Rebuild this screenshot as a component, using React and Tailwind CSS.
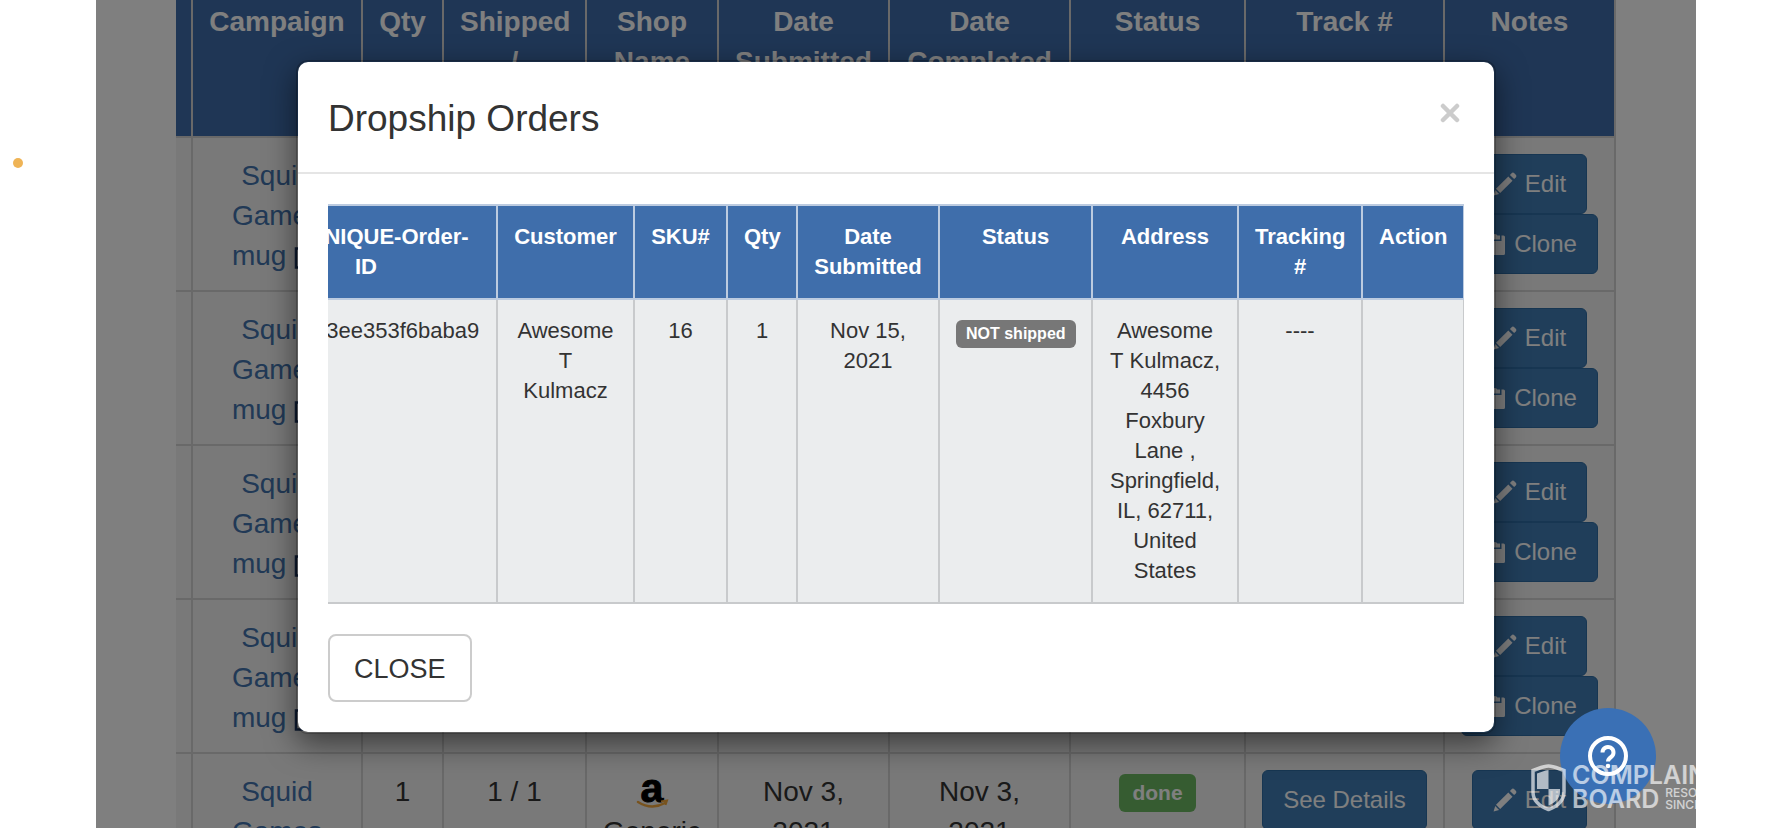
import React from "react";

const campaignColumns = [
    { label: "", width: 17 },
    { label: "Campaign", width: 170 },
    { label: "Qty", width: 81 },
    { label: "Shipped / Ordered", width: 143 },
    { label: "Shop Name", width: 132 },
    { label: "Date Submitted", width: 171 },
    { label: "Date Completed", width: 181 },
    { label: "Status", width: 175 },
    { label: "Track #", width: 199 },
    { label: "Notes", width: 171 },
];

const orderColumns = [
    { label: "Our UNIQUE-Order-\nID", width: 262 },
    { label: "Customer", width: 137 },
    { label: "SKU#", width: 93 },
    { label: "Qty", width: 70 },
    { label: "Date Submitted", width: 142 },
    { label: "Status", width: 153 },
    { label: "Address", width: 146 },
    { label: "Tracking #", width: 124 },
    { label: "Action", width: 101 },
];

const campaigns = [1, 2, 3, 4, 5].map((id) => ({
    id,
    name: "Squid Games mug",
    qty: 1,
    shipped: "1 / 1",
    shop: "Generic",
    submitted: "Nov 3, 2021",
    completed: "Nov 3, 2021",
    status: "done",
}));

function PencilIcon() {
    return (
        <svg width="24" height="24" viewBox="0 0 24 24" fill="currentColor" aria-hidden="true">
            <path d="M18.600 1.200c.8-.8 1.900-.8 2.700 0l1.500 1.500c.8.8.8 1.900 0 2.700l-1.700 1.700-4.200-4.200z" />
            <path d="M15.300 4.500l4.200 4.200L7.200 21 3 16.800z" />
            <path d="M2.200 18l3.900 3.900L.6 23.400z" />
        </svg>
    );
}

function ClipboardIcon() {
    return (
        <svg width="24" height="24" viewBox="0 0 24 24" fill="currentColor" aria-hidden="true">
            <path d="M8 3.500h2.600a2.600 2.600 0 0 1 4.800 0H18v4H8z" />
            <path d="M6.500 3.500h-2A1.500 1.500 0 0 0 3 5v16.500A1.500 1.500 0 0 0 4.500 23h17a1.500 1.500 0 0 0 1.500-1.500V5a1.500 1.500 0 0 0-1.500-1.500h-2V9h-13z" />
        </svg>
    );
}

function ExternalIcon() {
    return (
        <svg
            className="inline-block"
            width="28"
            height="22"
            viewBox="0 0 28 22"
            fill="none"
            stroke="currentColor"
            strokeWidth="2.500"
            aria-hidden="true"
        >
            <path d="M8 1.500H2v19h20v-6M12 1.500h13v9M25 1.500L12 13" />
        </svg>
    );
}

function AmazonIcon() {
    return (
        <svg className="mx-auto" width="40" height="40" viewBox="0 0 40 40" aria-label="Amazon">
            <text
                x="20"
                y="30"
                textAnchor="middle"
                fill="#000"
                stroke="#000"
                strokeWidth="1"
                fontFamily="Liberation Sans, sans-serif"
                fontWeight="700"
                fontSize="41"
            >
                a
            </text>
            <path d="M6 30c8 5 18 6 27 1" fill="none" stroke="#f0a63c" strokeWidth="2.500" strokeLinecap="round" />
            <path d="M29 29.500l6-1-1.500 4.500" fill="none" stroke="#f0a63c" strokeWidth="2" />
        </svg>
    );
}

function ActionButton({ icon, children }) {
    return (
        <button className="inline-flex items-center justify-center gap-2 whitespace-nowrap rounded-md border border-[#2e6da4] bg-[#407cb5] px-5 py-[11px] text-[24px] leading-9 text-white">
            {icon}
            {children}
        </button>
    );
}

function ColumnWidths({ columns }) {
    return (
        <colgroup>
            {columns.map((c, i) => (
                <col key={i} style={{ width: c.width }} />
            ))}
        </colgroup>
    );
}

function CampaignTable() {
    const cell = "border-r-2 border-b-2 border-[#d2d2d2] bg-[#f2f2f2] align-top";
    const textCell = `${cell} px-4 pt-[18px] pb-[14px]`;
    const controlCell = `${cell} p-4`;
    return (
        <table className="-mt-4 w-full table-fixed border-separate border-spacing-0 text-center text-[28px] leading-10 text-[#333]">
            <ColumnWidths columns={campaignColumns} />
            <thead>
                <tr className="h-[154px]">
                    {campaignColumns.map((c, i) => (
                        <th
                            key={i}
                            className={`border-r-2 border-b-2 border-[#d2d2d2] bg-[#3e6dab] pt-[18px] pb-[14px] align-top font-bold text-white ${i === 0 ? "px-0" : "px-4"}`}
                        >
                            {c.label}
                        </th>
                    ))}
                </tr>
            </thead>
            <tbody>
                {campaigns.map((row) => (
                    <tr key={row.id}>
                        <td className={cell}></td>
                        <td className={textCell}>
                            <a href="#campaign" className="text-[#4272ad]">
                                {row.name}{" "}
                                <span className="text-[#1f3866]">
                                    <ExternalIcon />
                                </span>
                            </a>
                        </td>
                        <td className={textCell}>{row.qty}</td>
                        <td className={textCell}>{row.shipped}</td>
                        <td className={textCell}>
                            <AmazonIcon />
                            {row.shop}
                        </td>
                        <td className={textCell}>{row.submitted}</td>
                        <td className={textCell}>{row.completed}</td>
                        <td className={controlCell}>
                            <span className="mt-1 inline-block rounded-md bg-[#6cb962] px-[13px] py-1 align-top text-[21px] font-bold leading-[30px] text-white">
                                {row.status}
                            </span>
                        </td>
                        <td className={controlCell}>
                            <div className="flex justify-center">
                                <ActionButton>See Details</ActionButton>
                            </div>
                        </td>
                        <td className={controlCell}>
                            <div className="flex flex-col items-center">
                                <ActionButton icon={<PencilIcon />}>Edit</ActionButton>
                                <ActionButton icon={<ClipboardIcon />}>Clone</ActionButton>
                            </div>
                        </td>
                    </tr>
                ))}
            </tbody>
        </table>
    );
}

function OrdersTable() {
    const td = "border-r-2 border-b-2 border-[#c8cacc] bg-[#ebedee] p-4 align-top last:border-r";
    return (
        // the table is wider than the dialog and scrolled to its right end
        <div className="flex justify-end overflow-hidden">
            <table className="w-[1228px] shrink-0 table-fixed border-separate border-spacing-0 text-center text-[22px] leading-[30px] text-[#333]">
                <ColumnWidths columns={orderColumns} />
                <thead>
                    <tr>
                        {orderColumns.map((c) => (
                            <th
                                key={c.label}
                                className="whitespace-pre-line border-y-2 border-r-2 border-[#bccbe0] bg-[#3f6eab] p-4 align-top font-bold text-white last:border-r"
                            >
                                {c.label}
                            </th>
                        ))}
                    </tr>
                </thead>
                <tbody>
                    <tr>
                        <td className={td}>6192973ee353f6baba9</td>
                        <td className={td}>Awesome T Kulmacz</td>
                        <td className={td}>16</td>
                        <td className={td}>1</td>
                        <td className={td}>Nov 15, 2021</td>
                        <td className={td}>
                            <span className="mt-1 inline-block whitespace-nowrap rounded-md bg-[#777] px-[10px] py-1 align-top text-[16px] font-bold leading-5 text-white">
                                NOT shipped
                            </span>
                        </td>
                        <td className={td}>
                            Awesome T&nbsp;Kulmacz, 4456 Foxbury Lane&nbsp;, Springfield, IL, 62711, United States
                        </td>
                        <td className={td}>----</td>
                        <td className={td}></td>
                    </tr>
                </tbody>
            </table>
        </div>
    );
}

function OrdersDialog() {
    return (
        <div
            role="dialog"
            aria-labelledby="dialog-title"
            className="w-[1200px] max-w-full rounded-xl border-2 border-black/20 bg-white bg-clip-padding shadow-[0_10px_30px_rgba(0,0,0,0.5)]"
        >
            <div className="flex items-start justify-between border-b-2 border-[#e5e5e5] px-[30px] pt-8 pb-7">
                <h4 id="dialog-title" className="text-[37px] leading-[50px] text-[#333]">
                    Dropship Orders
                </h4>
                <button aria-label="Close" className="flex size-[38px] items-center justify-end pr-1 text-[#ccc]">
                    <svg width="20" height="20" viewBox="0 0 20 20" stroke="currentColor" strokeWidth="4.500" strokeLinecap="round">
                        <path d="M3 3l14 14M17 3L3 17" />
                    </svg>
                </button>
            </div>
            <div className="p-[30px]">
                <OrdersTable />
                <button className="mt-[30px] block rounded-lg border-2 border-[#ccc] bg-white px-6 pt-[13px] pb-[11px] text-[27px] leading-10 text-[#333]">
                    CLOSE
                </button>
            </div>
        </div>
    );
}

function HelpButton() {
    return (
        <button
            aria-label="Help"
            className="absolute right-10 bottom-6 flex size-24 items-center justify-center rounded-full bg-[#3a70b5] text-white"
        >
            <svg width="42" height="42" viewBox="0 0 42 42" fill="none" stroke="currentColor" strokeWidth="4">
                <circle cx="21" cy="21" r="18" />
                <path d="M15.500 17.500a5.500 5.500 0 1 1 8.600 4.500c-2 1.400-3.100 2.300-3.100 4.500" />
                <circle cx="21" cy="31" r="2.300" fill="currentColor" stroke="none" />
            </svg>
        </button>
    );
}

function Watermark() {
    return (
        <div className="pointer-events-none absolute right-0 bottom-4 flex w-[166px] items-start gap-[6px] overflow-hidden whitespace-nowrap font-['Inter',sans-serif] font-semibold text-white/65">
            <svg className="shrink-0" width="36" height="48" viewBox="0 0 36 48" aria-hidden="true">
                <path
                    d="M3 6.500C8 5 13 2 18.500 2S29 5 34 6.500V28c0 8-6 14-15.500 17.500C9 42 3 36 3 28z"
                    fill="none"
                    stroke="currentColor"
                    strokeWidth="3.500"
                />
                <path d="M7 9.500c4-1 7.500-3 11.500-3.500v19H7z" fill="currentColor" />
                <path d="M18.500 25H30v3c0 6-4.500 10.500-11.500 13.500z" fill="currentColor" />
            </svg>
            <div className="flex flex-col text-[25px] leading-[23px]">
                <span>COMPLAINTS</span>
                <span className="flex items-center gap-[6px]">
                    BOARD
                    <span className="flex flex-col text-[12px] font-medium leading-3">
                        <span>RESOLVING</span>
                        <span>SINCE 2004</span>
                    </span>
                </span>
            </div>
        </div>
    );
}

export default function App() {
    return (
        <div className="relative bg-white px-24 font-['Liberation_Sans',Arial,sans-serif]">
            <span className="absolute top-[158px] left-[13px] size-[10px] rounded-full bg-[#efb456]" />
            <main className="relative h-screen overflow-hidden bg-white">
                <div className="px-20">
                    <CampaignTable />
                </div>
                <div className="absolute inset-0 flex items-start justify-center bg-black/50 pt-[60px]">
                    <OrdersDialog />
                </div>
                <HelpButton />
                <Watermark />
            </main>
        </div>
    );
}
